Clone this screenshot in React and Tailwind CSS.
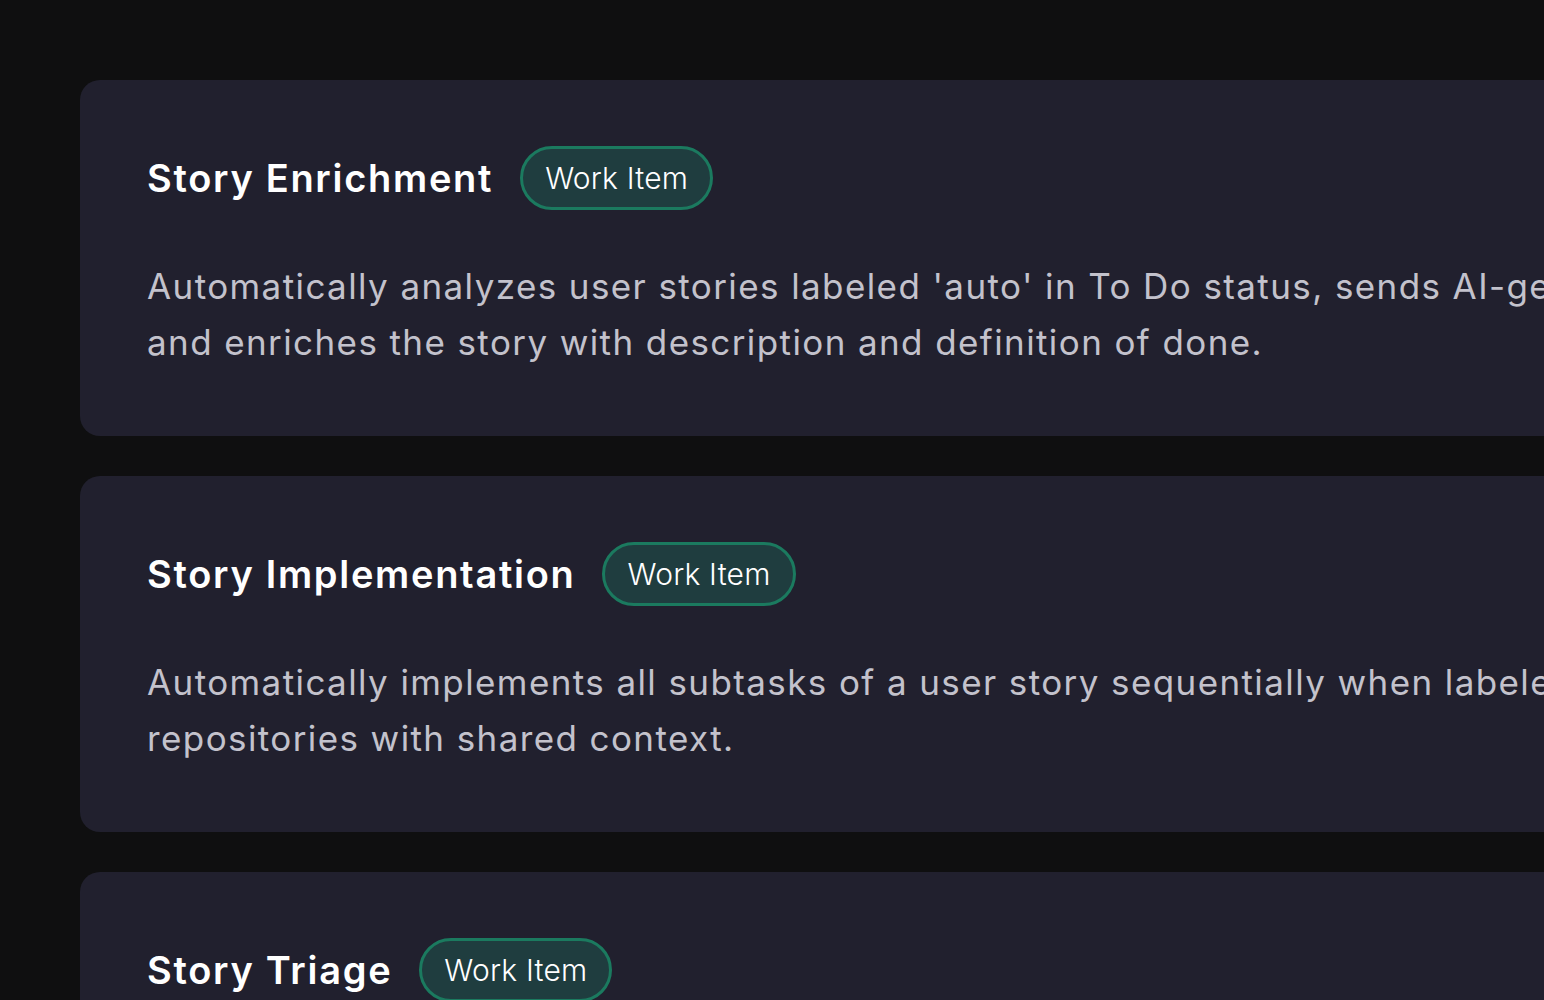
const workflows = [
  {
    title: "Story Enrichment",
    tag: "Work Item",
    lines: [
      "Automatically analyzes user stories labeled 'auto' in To Do status, sends AI-generated questions to the team,",
      "and enriches the story with description and definition of done.",
    ],
  },
  {
    title: "Story Implementation",
    tag: "Work Item",
    lines: [
      "Automatically implements all subtasks of a user story sequentially when labeled 'implement', across",
      "repositories with shared context.",
    ],
  },
  {
    title: "Story Triage",
    tag: "Work Item",
    lines: [
      "Automatically triages new user stories, assigns priority and routes them to the right team.",
    ],
  },
];

function Badge({ children }) {
  return (
    <span className="inline-flex h-[64px] items-center rounded-full border-[3px] border-[#1b7a5f] bg-[#1f3d3f] px-[22px] text-[30px] font-light tracking-[0.2px] text-white">
      {children}
    </span>
  );
}

function WorkflowCard({ title, tag, lines }) {
  return (
    <div className="w-[1600px] shrink-0 rounded-[20px] bg-[#21202e] px-[67px] pt-[66px] pb-[66px]">
      <div className="flex items-center gap-[27px]">
        <h2 className="text-[38px] font-semibold leading-none tracking-[1.7px] text-white">{title}</h2>
        <Badge>{tag}</Badge>
      </div>
      <p className="mt-[48px] whitespace-nowrap text-[35px] leading-[56px] tracking-[1.4px] text-[#c3c2cc]">
        {lines.map((line, i) => (
          <span key={i}>
            {line}
            {i < lines.length - 1 && <br />}
          </span>
        ))}
      </p>
    </div>
  );
}

export default function App() {
  return (
    <div
      className="h-screen w-screen overflow-hidden bg-[#0f0f10] pl-[80px] pt-[80px]"
      style={{ fontFamily: "Inter, 'Noto Sans', sans-serif" }}
    >
      <div className="flex flex-col gap-[40px]">
        {workflows.map((w) => (
          <WorkflowCard key={w.title} {...w} />
        ))}
      </div>
    </div>
  );
}
